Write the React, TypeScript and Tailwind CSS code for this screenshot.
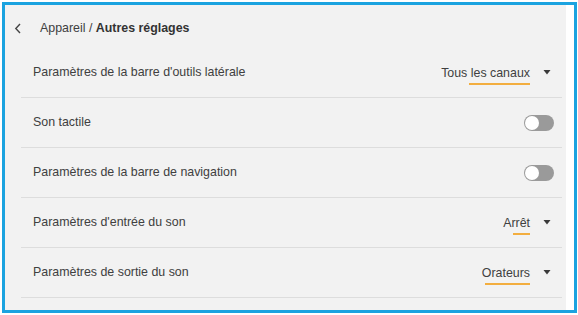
import React from "react";

function Caret() {
  return (
    <svg width="8" height="5" viewBox="0 0 8 5" className="ml-[13px]">
      <path d="M0.5 0 L7.5 0 L4 4.5 Z" fill="#3a3a3a" />
    </svg>
  );
}

function Select({ value, underline }: { value: string; underline: number }) {
  return (
    <div className="flex items-center">
      <div className="relative flex flex-col items-end">
        <span className="leading-[14px]">{value}</span>
        <div className="absolute right-0 top-[17px] h-[2px] bg-[#f3ae3f]" style={{ width: underline }} />
      </div>
      <Caret />
    </div>
  );
}

function Toggle() {
  return (
    <div className="w-[30px] h-[16px] rounded-full bg-[#9a9a9a] flex items-center px-[1px]">
      <div className="w-[14px] h-[14px] rounded-full bg-white" />
    </div>
  );
}

function Row({ label, right, pr }: { label: string; right: React.ReactNode; pr: string }) {
  return (
    <div className={`h-[50px] border-b border-[#dddddd] flex items-center justify-between pl-[12px] ${pr}`}>
      <span>{label}</span>
      {right}
    </div>
  );
}

export default function App() {
  return (
    <div className="w-[578px] h-[315px] bg-white pt-[2px] pl-[2px] pr-[1px]" style={{ fontFamily: '"Liberation Sans", Arial, sans-serif' }}>
      <div className="w-[575px] h-[311px] border-[3px] border-[#1ba3e0] flex bg-white">
        <div className="w-[561px] h-full bg-[#f2f2f2] text-[12.4px] text-[#404040]">
          <div className="h-[43px] pt-[4px] flex items-center pl-[9px]">
            <svg width="8" height="11" viewBox="0 0 8 11">
              <path d="M6 1 L1.8 5.5 L6 10" fill="none" stroke="#444" strokeWidth="1.4" />
            </svg>
            <span className="ml-[18px]">
              Appareil / <b className="font-bold text-[#333]">Autres réglages</b>
            </span>
          </div>
          <div className="ml-[16px] mr-[4px]">
            <Row label="Paramètres de la barre d'outils latérale" pr="pr-[11px]" right={<Select value="Tous les canaux" underline={61} />} />
            <Row label="Son tactile" pr="pr-[8px]" right={<Toggle />} />
            <Row label="Paramètres de la barre de navigation" pr="pr-[8px]" right={<Toggle />} />
            <Row label="Paramètres d'entrée du son" pr="pr-[11px]" right={<Select value="Arrêt" underline={17} />} />
            <Row label="Paramètres de sortie du son" pr="pr-[11px]" right={<Select value="Orateurs" underline={45} />} />
          </div>
        </div>
      </div>
    </div>
  );
}
